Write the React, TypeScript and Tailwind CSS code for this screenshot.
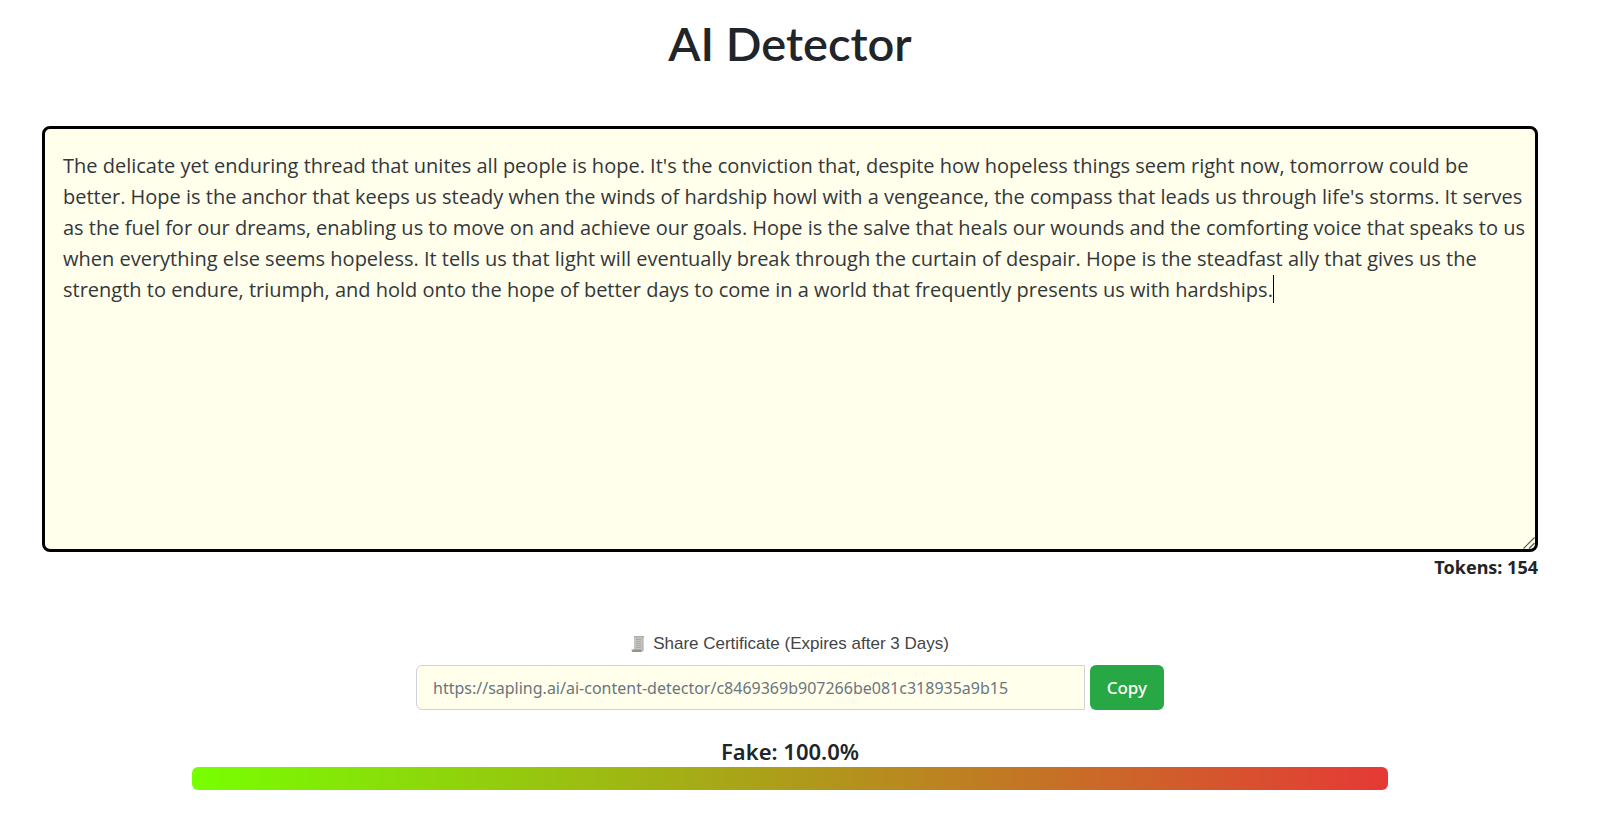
import { useState } from "react"

const SAMPLE_TEXT =
  "The delicate yet enduring thread that unites all people is hope. It's the conviction that, despite how hopeless things seem right now, tomorrow could be better. Hope is the anchor that keeps us steady when the winds of hardship howl with a vengeance, the compass that leads us through life's storms. It serves as the fuel for our dreams, enabling us to move on and achieve our goals. Hope is the salve that heals our wounds and the comforting voice that speaks to us when everything else seems hopeless. It tells us that light will eventually break through the curtain of despair. Hope is the steadfast ally that gives us the strength to endure, triumph, and hold onto the hope of better days to come in a world that frequently presents us with hardships."

const SHARE_URL = "https://sapling.ai/ai-content-detector/c8469369b907266be081c318935a9b15"

function ScrollIcon() {
  return (
    <svg width="14" height="18" viewBox="0 0 14 18" aria-hidden="true">
      <path d="M3 1h10l-1 1v14H3z" fill="#c3c4bf" />
      <path d="M3 1h10v1.500H3z" fill="#b0b1ac" />
      <path d="M0.500 14.500h9.500q0.500 2.500 2 2.500H2q-1.500 0-1.500-2.500z" fill="#92938e" />
      <path d="M5 4.500h5M5 6.500h5M5 8.500h5M5 10.500h5M5 12.500h5" stroke="#a2a39e" strokeWidth="0.800" />
      <path d="M12 2v14" stroke="#a6a7a2" strokeWidth="1" />
    </svg>
  )
}

function ResizeGrip() {
  return (
    <svg
      width="12"
      height="12"
      viewBox="0 0 12 12"
      aria-hidden="true"
      className="pointer-events-none absolute right-[3px] bottom-[3px]"
    >
      <path d="M0.500 11.500L11.500 0.500M6 11.500L11.500 6" stroke="#555555" strokeWidth="1.200" />
    </svg>
  )
}

export default function App() {
  const [text, setText] = useState(SAMPLE_TEXT)

  const handleCopy = () => {
    navigator.clipboard?.writeText(SHARE_URL)
  }

  return (
    <main className="bg-white pt-[13px] pr-[62px] pb-8 pl-[42px] font-['Noto_Sans',sans-serif] text-[#212529]">
      <h1 className="text-center font-['Lato',sans-serif] text-[47px] leading-[60px] font-semibold">AI Detector</h1>

      <div className="relative mt-[53px]">
        <textarea
          aria-label="Text to check"
          spellCheck={false}
          value={text}
          onChange={(e) => setText(e.target.value)}
          className="block h-[426px] w-full resize-none rounded-lg border-3 border-black bg-[#ffffec] pt-[21px] pr-1 pl-[18px] font-['Open_Sans',sans-serif] text-xl leading-[31px] text-[#33373b] caret-transparent outline-none"
        />
        <span className="absolute top-[149px] left-[1231px] h-7 w-px bg-black" />
        <ResizeGrip />
      </div>
      <div className="text-right text-lg leading-[30px] font-bold">Tokens: 154</div>

      <section className="mt-[50px] flex flex-col items-center">
        <label
          htmlFor="share-url"
          className="flex items-center gap-2 font-['Liberation_Sans',sans-serif] text-[17px] leading-6 text-[#444444]"
        >
          <ScrollIcon />
          Share Certificate (Expires after 3 Days)
        </label>
        <div className="mt-[9px] flex w-1/2 gap-[5px]">
          <input
            id="share-url"
            readOnly
            value={SHARE_URL}
            className="h-[45px] min-w-0 flex-1 rounded-l-md border border-[#ced4da] bg-[#ffffec] px-4 text-base text-[#6c757d] outline-none"
          />
          <button onClick={handleCopy} className="h-[45px] rounded-md bg-[#28a745] px-[17px] text-[17px] font-medium text-white">
            Copy
          </button>
        </div>
      </section>

      <section className="mt-[26px] flex flex-col items-center">
        <div className="text-[22px] leading-[31px] font-semibold">Fake: 100.0%</div>
        <div className="h-[23px] w-4/5 rounded-md bg-linear-to-r/srgb from-[#77ff00] to-[#e53935]" />
      </section>
    </main>
  )
}
